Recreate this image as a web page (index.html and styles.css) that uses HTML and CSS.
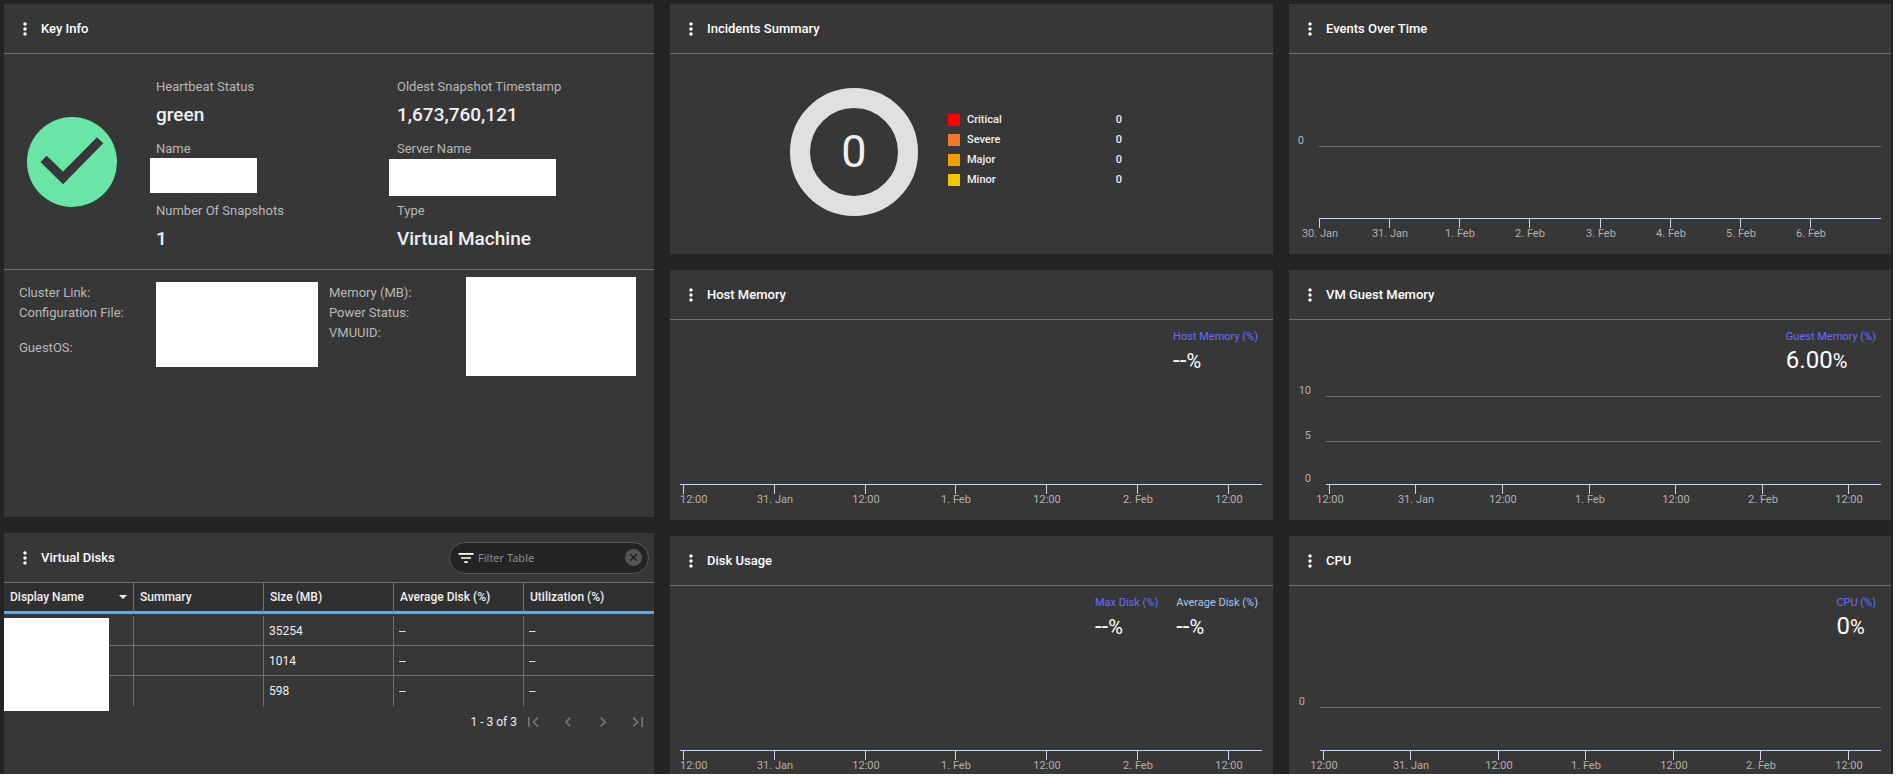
FILE: index.html
```html
<!DOCTYPE html>
<html lang="en">

<head>
    <meta charset="UTF-8">
    <meta name="viewport" content="width=device-width, initial-scale=1.0">
    <title>Virtual Machine</title>
    <link rel="stylesheet" href="styles.css">
</head>

<body>
    <svg class="sprite" aria-hidden="true">
        <symbol id="icon-more" viewBox="0 0 24 24">
            <path d="M12 8c1.1 0 2-.9 2-2s-.9-2-2-2-2 .9-2 2 .9 2 2 2zm0 2c-1.1 0-2 .9-2 2s.9 2 2 2 2-.9 2-2-.9-2-2-2zm0 6c-1.1 0-2 .9-2 2s.9 2 2 2 2-.9 2-2-.9-2-2-2z" />
        </symbol>
    </svg>
    <main class="dashboard">
        <div class="column column-info">
            <section class="panel key-info">
                <header class="panel-header">
                    <button class="menu" aria-label="Key Info menu"><svg><use href="#icon-more" /></svg></button>
                    <h2>Key Info</h2>
                </header>
                <div class="summary">
                    <svg class="status" viewBox="0 0 90 90" role="img" aria-label="Healthy">
                        <circle cx="45" cy="45" r="45" />
                        <path d="M13.5 45 19.7 38.7 36 54.5 70 20.3 76.3 26.3 36 67.3z" />
                    </svg>
                    <dl class="fields">
                        <div>
                            <dt>Heartbeat Status</dt>
                            <dd>green</dd>
                        </div>
                        <div>
                            <dt>Oldest Snapshot Timestamp</dt>
                            <dd>1,673,760,121</dd>
                        </div>
                        <div>
                            <dt>Name</dt>
                            <dd class="blank blank-name"></dd>
                        </div>
                        <div>
                            <dt>Server Name</dt>
                            <dd class="blank blank-server"></dd>
                        </div>
                        <div>
                            <dt>Number Of Snapshots</dt>
                            <dd>1</dd>
                        </div>
                        <div>
                            <dt>Type</dt>
                            <dd>Virtual Machine</dd>
                        </div>
                    </dl>
                </div>
                <div class="details">
                    <div class="detail">
                        <ul>
                            <li>Cluster Link:</li>
                            <li class="tall">Configuration File:</li>
                            <li>GuestOS:</li>
                        </ul>
                        <div class="blank blank-config"></div>
                    </div>
                    <div class="detail">
                        <ul>
                            <li>Memory (MB):</li>
                            <li>Power Status:</li>
                            <li>VMUUID:</li>
                        </ul>
                        <div class="blank blank-memory"></div>
                    </div>
                </div>
            </section>

            <section class="panel disks">
                <header class="panel-header">
                    <button class="menu" aria-label="Virtual Disks menu"><svg><use href="#icon-more" /></svg></button>
                    <h2>Virtual Disks</h2>
                    <div class="filter">
                        <svg class="filter-icon" viewBox="0 0 24 24"><path d="M10 18h4v-2h-4v2zM3 6v2h18V6H3zm3 7h12v-2H6v2z" /></svg>
                        <input type="text" placeholder="Filter Table" aria-label="Filter Table">
                        <button aria-label="Clear filter">
                            <svg viewBox="0 0 17 17">
                                <circle cx="8.5" cy="8.5" r="8.5" />
                                <path d="M5 5l7 7M12 5l-7 7" />
                            </svg>
                        </button>
                    </div>
                </header>
                <div class="table-wrap">
                    <table>
                        <thead>
                            <tr>
                                <th class="sorted">Display Name</th>
                                <th>Summary</th>
                                <th>Size (MB)</th>
                                <th>Average Disk (%)</th>
                                <th>Utilization (%)</th>
                            </tr>
                        </thead>
                        <tbody>
                            <tr>
                                <td></td>
                                <td></td>
                                <td>35254</td>
                                <td>--</td>
                                <td>--</td>
                            </tr>
                            <tr>
                                <td></td>
                                <td></td>
                                <td>1014</td>
                                <td>--</td>
                                <td>--</td>
                            </tr>
                            <tr>
                                <td></td>
                                <td></td>
                                <td>598</td>
                                <td>--</td>
                                <td>--</td>
                            </tr>
                        </tbody>
                    </table>
                    <div class="blank blank-disks"></div>
                </div>
                <nav class="pager" aria-label="Table pages">
                    <span>1 - 3 of 3</span>
                    <button aria-label="First page"><svg viewBox="0 0 24 24"><path d="M18.41 16.59L13.82 12l4.59-4.59L17 6l-6 6 6 6zM6 6h2v12H6z" /></svg></button>
                    <button aria-label="Previous page"><svg viewBox="0 0 24 24"><path d="M15.41 7.41L14 6l-6 6 6 6 1.41-1.41L10.83 12z" /></svg></button>
                    <button aria-label="Next page"><svg viewBox="0 0 24 24"><path d="M10 6L8.59 7.41 13.17 12l-4.58 4.59L10 18l6-6z" /></svg></button>
                    <button aria-label="Last page"><svg viewBox="0 0 24 24"><path d="M5.59 7.41L10.18 12l-4.59 4.59L7 18l6-6-6-6zM16 6h2v12h-2z" /></svg></button>
                </nav>
            </section>
        </div>

        <div class="column">
            <section class="panel">
                <header class="panel-header">
                    <button class="menu" aria-label="Incidents Summary menu"><svg><use href="#icon-more" /></svg></button>
                    <h2>Incidents Summary</h2>
                </header>
                <div class="incidents">
                    <div class="donut">0</div>
                    <ul class="severity">
                        <li class="critical">Critical <span>0</span></li>
                        <li class="severe">Severe <span>0</span></li>
                        <li class="major">Major <span>0</span></li>
                        <li class="minor">Minor <span>0</span></li>
                    </ul>
                </div>
            </section>

            <section class="panel">
                <header class="panel-header">
                    <button class="menu" aria-label="Host Memory menu"><svg><use href="#icon-more" /></svg></button>
                    <h2>Host Memory</h2>
                </header>
                <div class="chart-body">
                    <svg class="chart" data-chart="host"></svg>
                    <div class="readings">
                        <div class="reading">
                            <h3>Host Memory (%)</h3>
                            <p>--<small>%</small></p>
                        </div>
                    </div>
                </div>
            </section>

            <section class="panel">
                <header class="panel-header">
                    <button class="menu" aria-label="Disk Usage menu"><svg><use href="#icon-more" /></svg></button>
                    <h2>Disk Usage</h2>
                </header>
                <div class="chart-body">
                    <svg class="chart" data-chart="disk"></svg>
                    <div class="readings">
                        <div class="reading">
                            <h3>Max Disk (%)</h3>
                            <p>--<small>%</small></p>
                        </div>
                        <div class="reading average">
                            <h3>Average Disk (%)</h3>
                            <p>--<small>%</small></p>
                        </div>
                    </div>
                </div>
            </section>
        </div>

        <div class="column">
            <section class="panel">
                <header class="panel-header">
                    <button class="menu" aria-label="Events Over Time menu"><svg><use href="#icon-more" /></svg></button>
                    <h2>Events Over Time</h2>
                </header>
                <div class="chart-body">
                    <svg class="chart" data-chart="events"></svg>
                </div>
            </section>

            <section class="panel">
                <header class="panel-header">
                    <button class="menu" aria-label="VM Guest Memory menu"><svg><use href="#icon-more" /></svg></button>
                    <h2>VM Guest Memory</h2>
                </header>
                <div class="chart-body">
                    <svg class="chart" data-chart="guest"></svg>
                    <div class="readings">
                        <div class="reading">
                            <h3>Guest Memory (%)</h3>
                            <p>6.00<small>%</small></p>
                        </div>
                    </div>
                </div>
            </section>

            <section class="panel">
                <header class="panel-header">
                    <button class="menu" aria-label="CPU menu"><svg><use href="#icon-more" /></svg></button>
                    <h2>CPU</h2>
                </header>
                <div class="chart-body">
                    <svg class="chart" data-chart="cpu"></svg>
                    <div class="readings">
                        <div class="reading">
                            <h3>CPU (%)</h3>
                            <p>0<small>%</small></p>
                        </div>
                    </div>
                </div>
            </section>
        </div>
    </main>
    <script src="charts.js"></script>
</body>

</html>
```

FILE: styles.css
```css
* {
    padding: 0;
    margin: 0;
    box-sizing: border-box;
}

body {
    height: 100vh;
    padding: 0 3px 2px 0;
    overflow: hidden;
    background-color: #fff;
    color: #f0f0f0;
    font-family: Roboto, "Liberation Sans", sans-serif;
    font-size: 13px;
}

ul {
    list-style: none;
}

button {
    border: 0;
    background: none;
    color: inherit;
}

svg {
    display: block;
    fill: currentColor;
}

.sprite {
    display: none;
}

.dashboard {
    height: 100%;
    overflow: hidden;
    display: grid;
    grid-template-columns: 650fr 603fr 602fr;
    gap: 16px;
    padding: 4px 2px 0 4px;
    background-color: #242424;
}

.column {
    display: flex;
    flex-direction: column;
    gap: 16px;
    min-width: 0;
}

.panel {
    flex: none;
    background-color: #373737;
}

.panel-header {
    height: 50px;
    display: flex;
    align-items: center;
    padding: 0 5px 0 11px;
    border-bottom: 1px solid #707070;
}

.panel-header h2 {
    font-size: 13px;
    font-weight: 500;
    color: #fff;
}

.menu {
    width: 20px;
    height: 20px;
    margin-right: 6px;
    color: #fff;
}

.menu svg {
    width: 20px;
    height: 20px;
}

/* white blocks that hide a value */
.blank {
    background-color: #fff;
}

/* key info */
.key-info {
    height: 513px;
}

.summary {
    display: flex;
    align-items: center;
    height: 216px;
    padding: 0 16px 0 23px;
    border-bottom: 1px solid #707070;
}

.status {
    flex: none;
    width: 90px;
    height: 90px;
    margin-right: 39px;
}

.status circle {
    fill: #69e6a6;
}

.status path {
    fill: #373737;
}

.fields {
    flex: 1;
    display: grid;
    grid-template-columns: 1fr 1fr;
    grid-auto-rows: 62px;
    padding-top: 20px;
}

.fields dt {
    line-height: 16px;
    color: #b8b8b8;
}

.fields dd {
    margin-top: 8px;
    font-size: 19px;
    line-height: 24px;
    font-weight: 500;
}

.fields .blank-name {
    width: 107px;
    height: 35px;
    margin: 1px 0 0 -6px;
}

.fields .blank-server {
    width: 167px;
    height: 37px;
    margin: 2px 0 0 -8px;
}

.details {
    display: flex;
    padding: 13px 15px;
    line-height: 20px;
    color: #b8b8b8;
}

.detail {
    flex: 1;
    display: flex;
    align-items: flex-start;
}

.detail ul {
    width: 137px;
}

.detail .tall {
    height: 35px;
}

.blank-config {
    width: 162px;
    height: 85px;
    margin-top: -1px;
}

.blank-memory {
    width: 170px;
    height: 99px;
    margin-top: -6px;
}

/* virtual disks */
.disks {
    height: 250px;
    font-size: 12px;
}

.filter {
    display: flex;
    align-items: center;
    width: 200px;
    height: 32px;
    margin-left: auto;
    padding: 0 6px;
    border: 1px solid #555;
    border-radius: 16px;
    background-color: #242424;
}

.filter-icon {
    flex: none;
    width: 20px;
    height: 20px;
    color: #fff;
}

.filter input {
    flex: 1;
    min-width: 0;
    margin-left: 2px;
    border: 0;
    outline: none;
    background: none;
    color: #f0f0f0;
    font-family: "Noto Sans", sans-serif;
    font-size: 11px;
}

.filter input::placeholder {
    color: #8c8c8c;
}

.filter button svg {
    width: 17px;
    height: 17px;
}

.filter circle {
    fill: #555;
}

.filter button path {
    stroke: #242424;
    stroke-width: 1.5;
}

.table-wrap {
    position: relative;
}

table {
    width: 100%;
    table-layout: fixed;
    border-collapse: separate;
    border-spacing: 0;
}

th {
    height: 31px;
    padding: 0 6px;
    border-right: 1px solid #707070;
    border-bottom: 3px solid #49b1fb;
    background-color: #303030;
    font-weight: 500;
    text-align: left;
}

th.sorted::after {
    content: "";
    float: right;
    margin-top: 5px;
    border: 4px solid transparent;
    border-top-color: #fff;
    border-bottom: 0;
}

tbody::before {
    content: "";
    display: block;
    height: 2px;
}

td {
    height: 30px;
    padding: 0 5px;
    border-right: 1px solid #707070;
    border-bottom: 1px solid #707070;
}

th:last-child,
td:last-child {
    border-right: 0;
}

tr:last-child td {
    border-bottom: 0;
}

.blank-disks {
    position: absolute;
    top: 35px;
    left: 0;
    width: 105px;
    height: 93px;
}

.pager {
    display: flex;
    align-items: center;
    justify-content: flex-end;
    gap: 15px;
    height: 32px;
    padding-right: 6px;
}

.pager span {
    margin-right: -9px;
}

.pager button {
    width: 20px;
    height: 20px;
    color: #757575;
}

/* incidents */
.incidents {
    height: 200px;
    display: flex;
    align-items: center;
    justify-content: center;
    gap: 30px;
    padding-bottom: 5px;
}

.donut {
    width: 128px;
    height: 128px;
    border: 20px solid #e0e0e0;
    border-radius: 50%;
    font-size: 45px;
    line-height: 88px;
    text-align: center;
}

.severity {
    width: 205px;
    padding: 0 31px 4px 0;
    font-size: 11px;
    font-weight: 500;
    line-height: 20px;
}

.severity li {
    display: flex;
    align-items: center;
}

.severity li::before {
    content: "";
    width: 12px;
    height: 12px;
    margin-right: 7px;
    background-color: currentColor;
}

.severity span {
    margin-left: auto;
}

.severity .critical::before {
    background-color: #f00;
}

.severity .severe::before {
    background-color: #f57722;
}

.severity .major::before {
    background-color: #f0a000;
}

.severity .minor::before {
    background-color: #f0c800;
}

/* charts */
.chart-body {
    position: relative;
    height: 200px;
}

.chart {
    width: 100%;
    height: 200px;
}

.chart line {
    stroke: #707073;
    shape-rendering: crispEdges;
}

.chart .axis {
    stroke: #ccd6eb;
}

.chart text {
    fill: #b0b0b0;
    font-size: 11px;
}

.readings {
    position: absolute;
    top: 9px;
    right: 15px;
    display: flex;
    gap: 18px;
}

.reading h3 {
    color: #6b6bff;
    font-size: 11px;
    font-weight: 400;
    line-height: 16px;
}

.reading.average h3 {
    color: #a3c8f0;
}

.reading p {
    color: #fff;
    font-size: 24px;
    line-height: 30px;
}

.reading small {
    font-size: 20px;
}
```

FILE: charts.js
```js
(function () {
    'use strict';
    var NS = 'http://www.w3.org/2000/svg';
    var AXIS_Y = 164;
    var halfDays = ['12:00', '31. Jan', '12:00', '1. Feb', '12:00', '2. Feb', '12:00'];
    var days = ['30. Jan', '31. Jan', '1. Feb', '2. Feb', '3. Feb', '4. Feb', '5. Feb', '6. Feb'];

    // first and step are shares of the plot width
    var charts = {
        host: { left: 10, right: 11, labels: halfDays, first: 0.006, step: 0.156, grid: [] },
        disk: { left: 10, right: 11, labels: halfDays, first: 0.006, step: 0.156, grid: [] },
        events: { left: 30, right: 10, labels: days, first: 0, step: 0.125, grid: [[92, '0']] },
        guest: { left: 37, right: 10, labels: halfDays, first: 0.006, step: 0.156, grid: [[76, '10'], [121, '5'], [AXIS_Y, '0']] },
        cpu: { left: 31, right: 10, labels: halfDays, first: 0.006, step: 0.156, grid: [[121, '0']] }
    };

    function line(svg, x1, y1, x2, y2, cls) {
        var el = document.createElementNS(NS, 'line');
        el.setAttribute('x1', x1);
        el.setAttribute('y1', y1);
        el.setAttribute('x2', x2);
        el.setAttribute('y2', y2);
        if (cls) el.setAttribute('class', cls);
        svg.appendChild(el);
    }

    function text(svg, x, y, anchor, str) {
        var el = document.createElementNS(NS, 'text');
        el.setAttribute('x', x);
        el.setAttribute('y', y);
        el.setAttribute('text-anchor', anchor);
        el.textContent = str;
        svg.appendChild(el);
    }

    function draw(svg) {
        var c = charts[svg.getAttribute('data-chart')];
        var right = svg.parentNode.clientWidth - c.right;
        var width = right - c.left;
        svg.textContent = '';
        c.grid.forEach(function (g) {
            line(svg, c.left, g[0] + 0.5, right, g[0] + 0.5);
            text(svg, c.left - 15, g[0] - 2, 'end', g[1]);
        });
        line(svg, c.left, AXIS_Y + 0.5, right, AXIS_Y + 0.5, 'axis');
        c.labels.forEach(function (label, i) {
            var x = Math.floor(c.left + width * (c.first + c.step * i));
            line(svg, x + 0.5, AXIS_Y, x + 0.5, AXIS_Y + 10, 'axis');
            // keep the first label inside the panel
            if (x < 24) {
                text(svg, 10, AXIS_Y + 19, 'start', label);
            } else {
                text(svg, x + 1, AXIS_Y + 19, 'middle', label);
            }
        });
    }

    function drawAll() {
        document.querySelectorAll('.chart').forEach(draw);
    }

    drawAll();
    window.addEventListener('resize', drawAll);
})();
```
